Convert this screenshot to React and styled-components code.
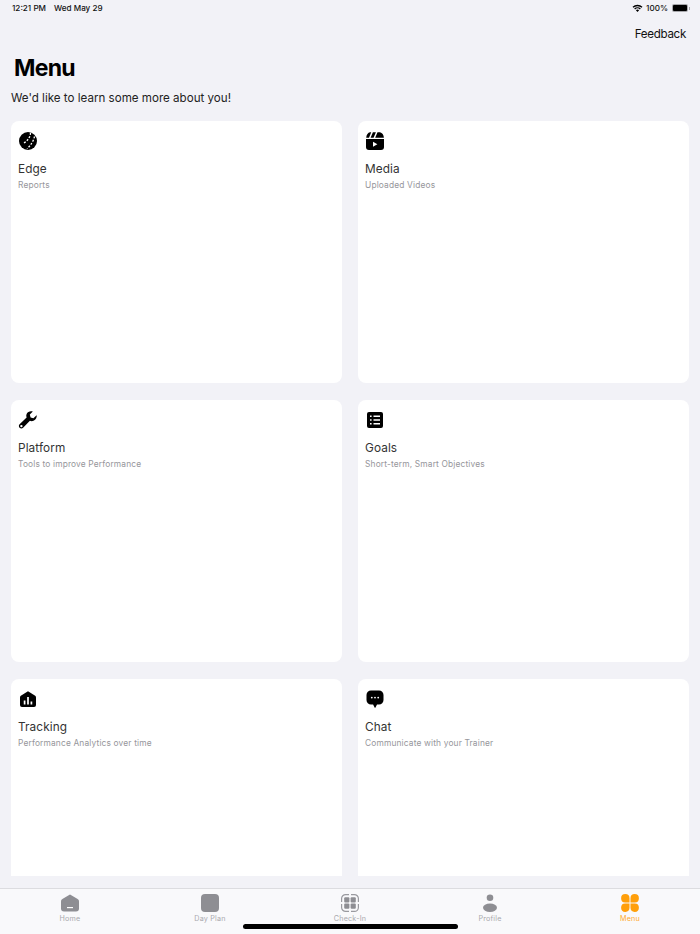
import React from 'react'
import styled, { createGlobalStyle } from 'styled-components'

const Global = createGlobalStyle`
  html, body { margin: 0; padding: 0; background: #f2f2f7; }
  body { font-family: Inter, "Liberation Sans", sans-serif; }
`

const Page = styled.div`
  width: 700px;
  height: 934px;
  display: flex;
  flex-direction: column;
  position: relative;
  overflow: hidden;
  background: #f2f2f7;
`

const StatusBar = styled.div`
  height: 16px;
  flex: none;
  display: flex;
  align-items: center;
  justify-content: space-between;
  padding: 0 11px 0 12px;
  font-size: 8.15px;
  font-weight: 500;
  color: #111;
`

const StatusLeft = styled.div`
  display: flex;
  gap: 8px;
`

const StatusRight = styled.div`
  display: flex;
  align-items: center;
  gap: 3px;
`

const Battery = styled.div`
  position: relative;
  width: 14px;
  height: 6px;
  margin: 0 2px 0 2px;
  border-radius: 1px;
  background: #000;
  box-shadow: 0 0 0 1px #a8a8ac;

  &::after {
    content: '';
    position: absolute;
    right: -3px;
    top: 1.5px;
    width: 1px;
    height: 3px;
    background: #a8a8ac;
  }
`

const NavBar = styled.div`
  height: 22px;
  margin-top: 7px;
  flex: none;
  display: flex;
  align-items: center;
  justify-content: flex-end;
  padding-right: 14px;
  font-size: 11.6px;
  letter-spacing: -0.3px;
  color: #111;
`

const Title = styled.h1`
  margin: 8px 0 0 14px;
  font-size: 23px;
  line-height: 30px;
  font-weight: 700;
  letter-spacing: -0.7px;
  color: #000;
`

const Intro = styled.p`
  margin: 7px 0 0 11px;
  font-size: 11.6px;
  line-height: 16px;
  color: #222;
`

const Scroll = styled.div`
  margin: 15px 11px 12px;
  flex: 1;
  min-height: 0;
  overflow: hidden;
`

const Grid = styled.div`
  display: grid;
  grid-template-columns: 1fr 1fr;
  gap: 17px 16px;
`

const Card = styled.div`
  height: 262px;
  box-sizing: border-box;
  padding: 10px 7px;
  border-radius: 8px;
  background: #fff;
`

const CardIcon = styled.div`
  width: 20px;
  height: 20px;
  margin-bottom: 10px;
  svg { display: block; width: 100%; height: 100%; }
`

const CardTitle = styled.div`
  font-size: 11.8px;
  line-height: 16px;
  letter-spacing: 0.1px;
  color: #333;
`

const CardSub = styled.div`
  margin-top: 2px;
  font-size: 8.4px;
  line-height: 12px;
  letter-spacing: 0.15px;
  color: #96969b;
`

const TabBar = styled.div`
  height: 45px;
  flex: none;
  display: grid;
  grid-template-columns: repeat(5, 1fr);
  background: #f9f9fb;
  border-top: 1px solid #dcdce0;
`

const Tab = styled.div`
  display: flex;
  flex-direction: column;
  align-items: center;
  padding-top: 5px;
  font-size: 7.2px;
  line-height: 10px;
  letter-spacing: 0.2px;
  color: ${({ $active }) => ($active ? '#ffa92e' : '#a9a9ae')};
  svg { display: block; width: 18px; height: 18px; margin-bottom: 2px; }
`

const HomeIndicator = styled.div`
  position: absolute;
  left: 243px;
  bottom: 5px;
  width: 215px;
  height: 5px;
  border-radius: 3px;
  background: #000;
`

const BaseballIcon = () => (
  <svg viewBox="0 0 20 20">
    <circle cx="10" cy="10" r="9" fill="#000" />
    <path d="M12.500 1.800C12.500 6 9.500 10 5 12.500M16.500 5.500C15.500 10 13 14 9 17.800" fill="none" stroke="#fff" strokeWidth="1.300" strokeDasharray="2 1.500" />
  </svg>
)

const ClapperIcon = () => (
  <svg viewBox="0 0 20 20">
    <path d="M1 8h18v8a3 3 0 0 1-3 3H4a3 3 0 0 1-3-3z" fill="#000" />
    <path d="M1.200 6.800C1.500 3.500 3 1.800 5 1.300h1.200L4 6.800zM5.600 6.800l2.300-5.600h3L8.600 6.800zM10.200 6.800l2.300-5.600h2.500c2.200.5 3.700 2.600 3.900 5.600z" fill="#000" />
    <path d="M8 10.700v5l4.400-2.500z" fill="#fff" />
  </svg>
)

const WrenchIcon = () => (
  <svg viewBox="0 0 20 20">
    <path fillRule="evenodd" d="M18.600 5.200l-3.200 3-2.800-.8-.8-2.800 3-3.200c-2.600-.7-5.200.2-6.200 2.600-.5 1.200-.5 2.400 0 3.600L1.600 14.300c-1 1-1 2.600 0 3.500 1 1 2.500 1 3.500 0l6.800-7c1.200.5 2.400.5 3.600 0 2.400-1 3.800-3.800 3.100-6.600zM3.400 17.300a1.200 1.200 0 1 1 0-2.400 1.200 1.200 0 0 1 0 2.400z" fill="#000" />
  </svg>
)

const ListIcon = () => (
  <svg viewBox="0 0 20 20">
    <rect x="2" y="2" width="16" height="16" rx="2" fill="#000" />
    <path d="M8.500 6.200h6.500M8.500 10h6.500M8.500 13.800h6.500M5 6.200h1.600M5 10h1.600M5 13.800h1.600" stroke="#fff" strokeWidth="1.400" />
  </svg>
)

const TrackingIcon = () => (
  <svg viewBox="0 0 20 20">
    <path d="M10 2.200l7.200 4.600c.6.400.8.900.8 1.500V16a2 2 0 0 1-2 2H4a2 2 0 0 1-2-2V8.300c0-.6.200-1.100.8-1.500z" fill="#000" />
    <path d="M6.600 11.500v4M10 8v7.500M13.400 12.500v3" stroke="#fff" strokeWidth="1.700" />
  </svg>
)

const ChatIcon = () => (
  <svg viewBox="0 0 20 20">
    <path d="M6 1.500h8a4.500 4.500 0 0 1 4.500 4.500v5a4.500 4.500 0 0 1-4.500 4.500h-2l-1.500 2.900a.5.500 0 0 1-.9 0L8.100 15.500H6A4.500 4.500 0 0 1 1.500 11V6A4.500 4.500 0 0 1 6 1.500z" fill="#000" />
    <circle cx="6.800" cy="8.600" r=".9" fill="#fff" />
    <circle cx="10" cy="8.600" r=".9" fill="#fff" />
    <circle cx="13.200" cy="8.600" r=".9" fill="#fff" />
  </svg>
)

const WifiIcon = () => (
  <svg viewBox="0 0 12 9" width="11" height="8">
    <path d="M.4 3.200a8 8 0 0 1 11.200 0l-1 1.100a6.500 6.500 0 0 0-9.200 0zM2.300 5.100a5.200 5.200 0 0 1 7.400 0l-1 1.100a3.700 3.700 0 0 0-5.400 0zM4.200 7a2.500 2.500 0 0 1 3.600 0L6 8.900z" fill="#000" />
  </svg>
)

const TabHome = () => (
  <svg viewBox="0 0 18 18">
    <path d="M9 .5l7.200 4.200c1 .6 1.800 1.400 1.800 2.800v7a3 3 0 0 1-3 3H3a3 3 0 0 1-3-3v-7c0-1.400.8-2.200 1.800-2.800z" fill="#8e8e93" />
    <rect x="6" y="13" width="6" height="1.200" fill="#fff" />
  </svg>
)

const TabPlan = () => (
  <svg viewBox="0 0 18 18">
    <rect width="18" height="18" rx="4" fill="#8e8e93" />
  </svg>
)

const TabCheck = () => (
  <svg viewBox="0 0 18 18">
    <path d="M8 .6H4.600a4 4 0 0 0-4 4V8M10 .6h3.400a4 4 0 0 1 4 4V8M8 17.400H4.600a4 4 0 0 1-4-4V10M10 17.400h3.400a4 4 0 0 0 4-4V10" fill="none" stroke="#9a9a9f" strokeWidth="1.200" />
    <rect x="3.200" y="3.200" width="5.200" height="5.200" rx="1" fill="#8e8e93" />
    <rect x="9.600" y="3.200" width="5.200" height="5.200" rx="1" fill="#8e8e93" />
    <rect x="3.200" y="9.600" width="5.200" height="5.200" rx="1" fill="#8e8e93" />
    <rect x="9.600" y="9.600" width="5.200" height="5.200" rx="1" fill="#8e8e93" />
  </svg>
)

const TabProfile = () => (
  <svg viewBox="0 0 18 18">
    <circle cx="9" cy="3.800" r="3.300" fill="#8e8e93" />
    <ellipse cx="9" cy="13.800" rx="7" ry="4.200" fill="#8e8e93" />
  </svg>
)

const TabMenu = () => (
  <svg viewBox="0 0 18 18">
    <path d="M8.500 8.500H4.200a4.200 4.200 0 1 1 4.300-4.300zM9.500 8.500V4.200a4.200 4.200 0 1 1 4.300 4.300zM8.500 9.500v4.300a4.200 4.200 0 1 1-4.300-4.300zM9.500 9.500h4.300a4.200 4.200 0 1 1-4.300 4.300z" fill="#ff9f0a" />
  </svg>
)

const cards = [
  { title: 'Edge', sub: 'Reports', Icon: BaseballIcon },
  { title: 'Media', sub: 'Uploaded Videos', Icon: ClapperIcon },
  { title: 'Platform', sub: 'Tools to improve Performance', Icon: WrenchIcon },
  { title: 'Goals', sub: 'Short-term, Smart Objectives', Icon: ListIcon },
  { title: 'Tracking', sub: 'Performance Analytics over time', Icon: TrackingIcon },
  { title: 'Chat', sub: 'Communicate with your Trainer', Icon: ChatIcon },
]

const tabs = [
  { label: 'Home', Icon: TabHome },
  { label: 'Day Plan', Icon: TabPlan },
  { label: 'Check-In', Icon: TabCheck },
  { label: 'Profile', Icon: TabProfile },
  { label: 'Menu', Icon: TabMenu, active: true },
]

const App = () => (
  <Page>
    <Global />
    <StatusBar>
      <StatusLeft>
        <span>12:21 PM</span>
        <span>Wed May 29</span>
      </StatusLeft>
      <StatusRight>
        <WifiIcon />
        <span>100%</span>
        <Battery />
      </StatusRight>
    </StatusBar>
    <NavBar>Feedback</NavBar>
    <Title>Menu</Title>
    <Intro>We'd like to learn some more about you!</Intro>
    <Scroll>
      <Grid>
        {cards.map(({ title, sub, Icon }) => (
          <Card key={title}>
            <CardIcon><Icon /></CardIcon>
            <CardTitle>{title}</CardTitle>
            <CardSub>{sub}</CardSub>
          </Card>
        ))}
      </Grid>
    </Scroll>
    <TabBar>
      {tabs.map(({ label, Icon, active }) => (
        <Tab key={label} $active={active}>
          <Icon />
          {label}
        </Tab>
      ))}
    </TabBar>
    <HomeIndicator />
  </Page>
)

export default App
